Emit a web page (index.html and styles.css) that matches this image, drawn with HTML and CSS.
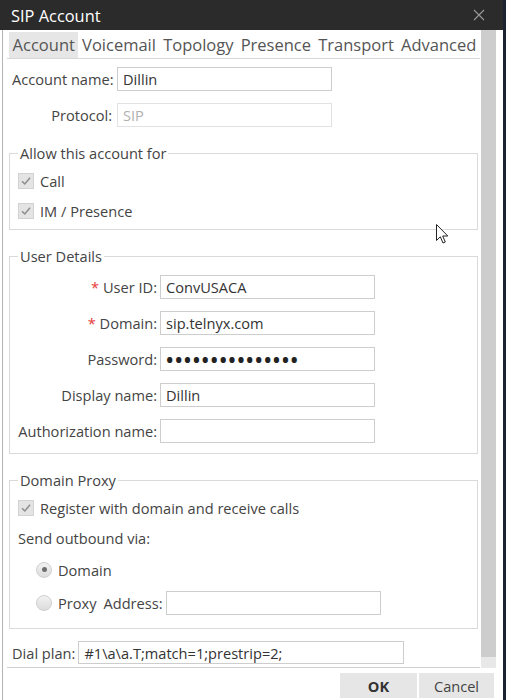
FILE: index.html
```html
<!DOCTYPE html>
<html lang="en">
<head>
  <meta charset="UTF-8">
  <meta name="viewport" content="width=device-width, initial-scale=1.0">
  <title>SIP Account</title>
  <link rel="stylesheet" href="styles.css">
</head>
<body>
  <div class="dialog">
    <div class="titlebar">
      <span class="title">SIP Account</span>
      <svg class="close" width="12" height="12" viewBox="0 0 12 12">
        <path d="M1 1 L11 11 M11 1 L1 11" stroke="#9a9a9a" stroke-width="1.1" fill="none"/>
      </svg>
    </div>
    <div class="frame">
      <div class="scroll-area">
        <div class="pane">
          <div class="tabs">
            <span class="tab active">Account</span>
            <span class="tab">Voicemail</span>
            <span class="tab">Topology</span>
            <span class="tab">Presence</span>
            <span class="tab">Transport</span>
            <span class="tab">Advanced</span>
          </div>

          <div class="top-grid">
            <label for="accountName">Account name:</label>
            <input class="field" id="accountName" type="text" value="Dillin">
            <label for="protocol">Protocol:</label>
            <input class="field" id="protocol" type="text" value="SIP" disabled>
          </div>

          <fieldset class="group">
            <legend>Allow this account for</legend>
            <div class="check-row">
              <span class="check"><svg width="14" height="14" viewBox="0 0 14 14"><path d="M3 7.2 L5.8 10 L11 3.8" stroke="#8d8d8d" stroke-width="1.5" fill="none"/></svg></span>
              Call
            </div>
            <div class="check-row">
              <span class="check"><svg width="14" height="14" viewBox="0 0 14 14"><path d="M3 7.2 L5.8 10 L11 3.8" stroke="#8d8d8d" stroke-width="1.5" fill="none"/></svg></span>
              IM / Presence
            </div>
          </fieldset>

          <fieldset class="group details">
            <legend>User Details</legend>
            <div class="detail-grid">
              <label for="userId"><span class="req">*</span> User ID:</label>
              <input class="field" id="userId" type="text" value="ConvUSACA">
              <label for="domain"><span class="req">*</span> Domain:</label>
              <input class="field" id="domain" type="text" value="sip.telnyx.com">
              <label for="password">Password:</label>
              <input class="field password" id="password" type="password" value="telnyxpassword1">
              <label for="displayName">Display name:</label>
              <input class="field" id="displayName" type="text" value="Dillin">
              <label for="authName">Authorization name:</label>
              <input class="field" id="authName" type="text" value="">
            </div>
          </fieldset>

          <fieldset class="group proxy">
            <legend>Domain Proxy</legend>
            <div class="check-row">
              <span class="check"><svg width="14" height="14" viewBox="0 0 14 14"><path d="M3 7.2 L5.8 10 L11 3.8" stroke="#8d8d8d" stroke-width="1.5" fill="none"/></svg></span>
              Register with domain and receive calls
            </div>
            <div class="text-row">Send outbound via:</div>
            <div class="radio-row">
              <span class="radio selected"></span>
              Domain
            </div>
            <div class="radio-row">
              <span class="radio"></span>
              Proxy
              <label class="address-label" for="proxyAddress">Address:</label>
              <input class="field" id="proxyAddress" type="text" value="">
            </div>
          </fieldset>

          <div class="dial-row">
            <label for="dialPlan">Dial plan:</label>
            <input class="field dial" id="dialPlan" type="text" value="#1\a\a.T;match=1;prestrip=2;">
          </div>
        </div>
        <div class="scrollbar"><div class="thumb"></div></div>
      </div>
      <div class="actions">
        <button class="btn primary">OK</button>
        <button class="btn">Cancel</button>
      </div>
    </div>
  </div>

  <svg class="pointer" width="14" height="21" viewBox="0 0 14 21">
    <path d="M0.5 0.5 L0.5 16.5 L4.3 12.8 L7 19 L9.3 18 L6.7 12 L11.8 12 Z" fill="#fff" stroke="#222" stroke-width="1"/>
  </svg>
</body>
</html>
```

FILE: styles.css
```css
body {
  margin: 0;
  font-family: "Open Sans", "Noto Sans", sans-serif;
  font-size: 14.6px;
  color: #444;
  background-color: #fff;
}
.dialog {
  width: 506px;
  height: 700px;
  display: flex;
  flex-direction: column;
  border-right: 3px solid #1d2430;
  box-sizing: border-box;
  overflow: hidden;
}
.titlebar {
  height: 30px;
  flex: none;
  display: flex;
  align-items: center;
  justify-content: space-between;
  background-color: #2b2b2b;
  color: #fff;
  font-size: 16.4px;
  padding: 0 18px 0 11px;
}
.frame {
  flex: 1;
  display: flex;
  flex-direction: column;
  margin-left: 2px;
  border-left: 1px solid #b4b4b4;
}
.scroll-area {
  height: 638px;
  display: flex;
}
.pane {
  width: 473px;
  margin-left: 4px;
  border-bottom: 1px solid #d0d0d0;
  box-sizing: border-box;
}
.tabs {
  display: flex;
  padding: 2px 0 0 2px;
  height: 26px;
  border-bottom: 1px solid #d8d8d8;
}
.tab {
  padding: 0 3.6px;
  font-size: 16.5px;
  line-height: 26px;
  color: #555;
}
.tab.active {
  background-color: #e6e6e6;
}
.field {
  height: 24px;
  width: 215px;
  box-sizing: border-box;
  border: 1px solid #cdcdcd;
  padding: 0 5px;
  font-family: inherit;
  font-size: 14.6px;
  color: #333;
  background-color: #fff;
  outline: none;
}
.field:disabled {
  border-color: #e2e2e2;
  color: #b0b0b0;
}
/* bigger, tighter bullets for the masked password */
.field.password {
  font-size: 25px;
  letter-spacing: -0.5px;
  padding: 0 4px;
  color: #222;
}
.top-grid {
  display: grid;
  grid-template-columns: 100px 215px;
  column-gap: 5px;
  row-gap: 12px;
  align-items: center;
  margin-top: 8px;
  padding-left: 5px;
}
.top-grid label, .detail-grid label {
  text-align: right;
  white-space: nowrap;
}
.group {
  margin: 16px 2px 0;
  padding: 3px 8px 3px;
  border: 1px solid #dadada;
}
.group legend {
  padding: 0 2px;
  line-height: 20px;
  color: #444;
}
.check-row, .text-row {
  display: flex;
  align-items: center;
  height: 30px;
}
.check {
  width: 16px;
  height: 16px;
  box-sizing: border-box;
  border: 1px solid #d2d2d2;
  background-color: #e4e4e4;
  display: flex;
  align-items: center;
  justify-content: center;
  margin-right: 6px;
}
.details {
  padding: 9px 8px 10px;
}
.detail-grid {
  display: grid;
  grid-template-columns: 139px 215px;
  column-gap: 3px;
  row-gap: 12px;
  align-items: center;
}
.req {
  color: #e53935;
}
.proxy {
  padding-bottom: 9px;
}
.radio-row {
  display: flex;
  align-items: center;
  height: 33px;
  padding-left: 18px;
}
.radio {
  width: 16px;
  height: 16px;
  box-sizing: border-box;
  border-radius: 50%;
  border: 1px solid #cfcfcf;
  background: linear-gradient(#f2f2f2, #dcdcdc);
  margin-right: 6px;
  display: flex;
  align-items: center;
  justify-content: center;
}
.radio.selected::after {
  content: "";
  width: 5px;
  height: 5px;
  border-radius: 50%;
  background-color: #6e6e6e;
}
.address-label {
  margin: 0 4px 0 7px;
}
.dial-row {
  display: flex;
  align-items: center;
  margin-top: 12px;
  padding-left: 5px;
}
.dial-row label {
  margin-right: 3px;
}
.field.dial {
  width: 326px;
  height: 23px;
}
.scrollbar {
  width: 15px;
  margin: 0 7px 0 1px;
  background-color: #e8e8e8;
}
.thumb {
  height: 627px;
  background-color: #cdcdcd;
}
.actions {
  display: flex;
  justify-content: flex-end;
  gap: 2px;
  padding: 5px 9px 0 0;
}
.btn {
  height: 25px;
  border: none;
  background-color: #e6e6e6;
  font-family: inherit;
  font-size: 14.6px;
  color: #444;
  padding: 0;
  width: 75px;
}
.btn.primary {
  width: 77px;
  font-weight: bold;
  color: #333;
}
.pointer {
  position: absolute;
  left: 436px;
  top: 224px;
}
```
